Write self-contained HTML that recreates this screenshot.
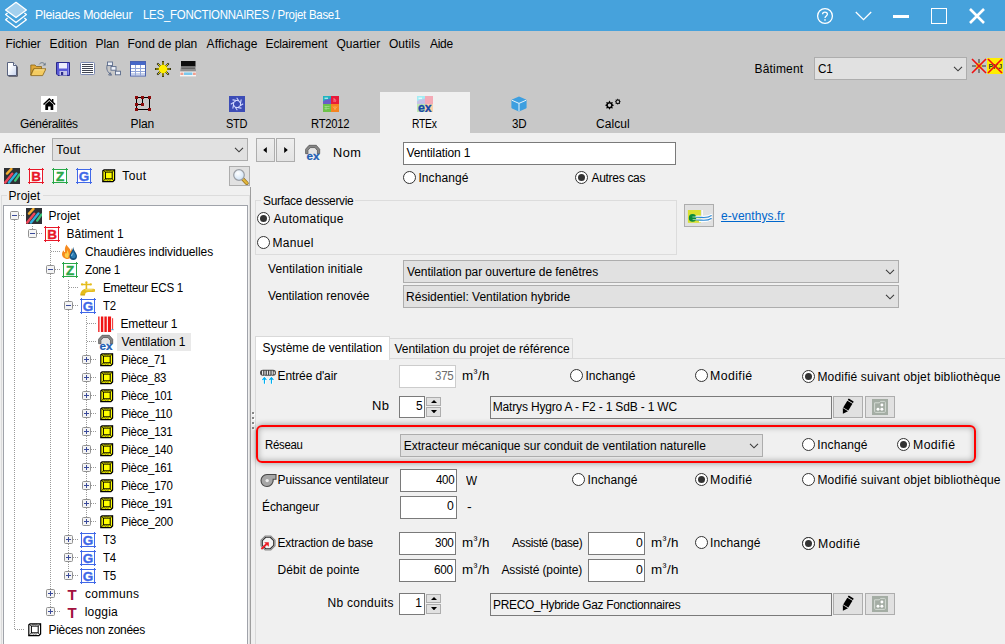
<!DOCTYPE html><html lang="fr"><head><meta charset="utf-8"><title>Pleiades Modeleur</title><style>
html,body{margin:0;padding:0;}
body{width:1005px;height:644px;overflow:hidden;position:relative;background:#f0f0f0;font-family:"Liberation Sans", sans-serif;font-size:12px;color:#000;}
.t{position:absolute;white-space:pre;line-height:18px;height:18px;transform-origin:0 50%;}
svg{display:block;}
</style></head><body><div style="position:absolute;left:0px;top:0px;width:1005px;height:31px;box-sizing:border-box;background:#46a2dc;"></div><svg style="position:absolute;left:0px;top:0px" width="32" height="31" viewBox="0 0 32 31">
<path d="M16 2.3 L26.4 10 L16 17.6 L5.6 10 Z" fill="#a3d0ee" stroke="#fff" stroke-width="1.3" stroke-linejoin="round"/>
<path d="M7.6 13 L5.6 14.6 L16 22.5 L26.4 14.6 L24.4 13" fill="none" stroke="#fff" stroke-width="1.3" stroke-linejoin="round"/>
<path d="M7.6 18.1 L5.6 19.7 L16 27.6 L26.4 19.7 L24.4 18.1" fill="none" stroke="#fff" stroke-width="1.3" stroke-linejoin="round"/>
</svg><svg style="position:absolute;left:816px;top:7px" width="18" height="18" viewBox="0 0 18 18">
<circle cx="9" cy="9" r="7.4" fill="none" stroke="#fff" stroke-width="1.3"/>
<path d="M6.6 7.2 C6.6 4.4 11.4 4.4 11.4 7.2 C11.4 8.9 9 9 9 11" fill="none" stroke="#fff" stroke-width="1.3"/>
<rect x="8.3" y="12.2" width="1.4" height="1.5" fill="#fff"/></svg><svg style="position:absolute;left:855px;top:11px" width="17" height="10" viewBox="0 0 17 10"><path d="M0.8 1 L8.5 8.6 L16.2 1" fill="none" stroke="#fff" stroke-width="1.3"/></svg><div style="position:absolute;left:893px;top:15px;width:16px;height:3px;box-sizing:border-box;background:#fff;"></div><div style="position:absolute;left:931px;top:8px;width:16px;height:16px;box-sizing:border-box;border:1px solid #fff;"></div><svg style="position:absolute;left:969px;top:8px" width="16" height="16" viewBox="0 0 16 16"><path d="M1 1 L15 15 M15 1 L1 15" fill="none" stroke="#fff" stroke-width="2.6"/></svg><div style="position:absolute;left:0px;top:31px;width:1005px;height:102px;box-sizing:border-box;background:#c8c8c8;"></div><svg style="position:absolute;left:5px;top:61px" width="16" height="16" viewBox="0 0 16 16"><defs><linearGradient id="gnf" x1="0" y1="0" x2="1" y2="1"><stop offset="0.3" stop-color="#fff"/><stop offset="1" stop-color="#c4d2ee"/></linearGradient></defs><path d="M2.5 1.5 H8.5 L11.5 4.5 V14.5 H2.5 Z" fill="url(#gnf)" stroke="#5a6480" stroke-width="1"/><path d="M8.5 1.5 V4.5 H11.5" fill="#e8eef8" stroke="#5a6480" stroke-width="1"/><path d="M12.4 5.5 V15.3 H3.5" fill="none" stroke="#3a3a4a" stroke-width="0.8"/></svg><svg style="position:absolute;left:30px;top:61px" width="16" height="16" viewBox="0 0 16 16"><path d="M0.8 4 H5 L6.3 5.5 H11.5 V8 H3.5 L0.8 14 Z" fill="#e0a838" stroke="#8a6414" stroke-width="0.8"/><path d="M3.8 7.8 H16 L12.6 14.6 H0.8 Z" fill="#f4cc62" stroke="#8a6414" stroke-width="0.8"/><path d="M4.6 8.8 H14.4" stroke="#fbe6a2" stroke-width="0.8"/><path d="M9.2 3.4 C10.6 1.2 13.4 1 14.8 3.4" fill="none" stroke="#6a7a8a" stroke-width="1"/><path d="M15.6 1.4 V4.4 H12.6 Z" fill="#6a7a8a"/></svg><svg style="position:absolute;left:55px;top:61px" width="16" height="16" viewBox="0 0 16 16"><path d="M1.5 1.5 H14.5 V14.5 H3 L1.5 13 Z" fill="#5a5ad6" stroke="#2a2a8a" stroke-width="1"/><rect x="4" y="2" width="8" height="5.5" fill="#eeeefc"/><rect x="4.5" y="10" width="7.5" height="4.5" fill="#c2c2e6"/><rect x="6" y="11" width="2.2" height="3" fill="#2a2a8a"/><path d="M13.5 2.5 V13.5" stroke="#8a8aec" stroke-width="1"/></svg><svg style="position:absolute;left:80px;top:61px" width="16" height="16" viewBox="0 0 16 16"><rect x="0.5" y="1.5" width="14" height="12" rx="1" fill="#fff" stroke="#7a88b0" stroke-width="1"/><path d="M2 3.5 H13 M2 5.5 H13 M2 7.5 H13 M2 9.5 H13 M2 11.5 H13" stroke="#2a3040" stroke-width="0.9"/></svg><svg style="position:absolute;left:105px;top:61px" width="16" height="16" viewBox="0 0 16 16"><g fill="#eef2fa" stroke="#5a6a8a" stroke-width="0.9"><rect x="2.5" y="1" width="5" height="3.6"/><rect x="6" y="5.6" width="5" height="3.6"/><rect x="10.5" y="10.2" width="5" height="3.6"/></g><path d="M2.2 4 C1 8 2.5 11.5 6 13.5 M6.6 14.2 L3.6 14 L5.2 11.6 Z M7 4.8 L6.4 5.4 M11 9.4 L10.6 10" fill="none" stroke="#5a6a8a" stroke-width="0.9"/></svg><svg style="position:absolute;left:130px;top:61px" width="16" height="16" viewBox="0 0 16 16"><rect x="0.5" y="0.5" width="15" height="14.5" fill="#fff" stroke="#4a62b0" stroke-width="1"/><rect x="1" y="1" width="14" height="3" fill="#4668c8"/><path d="M1 7.5 H15 M1 10.5 H15 M1 13 H15 M5.5 4 V15 M10.5 4 V15" stroke="#90a4d8" stroke-width="1"/></svg><svg style="position:absolute;left:155px;top:61px" width="16" height="16" viewBox="0 0 16 16"><path d="M8 0 V16 M0 8 H16 M2.3 2.3 L13.7 13.7 M13.7 2.3 L2.3 13.7" stroke="#111" stroke-width="1.9"/><path d="M8 0.6 V15.4 M0.6 8 H15.4 M2.8 2.8 L13.2 13.2 M13.2 2.8 L2.8 13.2" stroke="#ffee00" stroke-width="0.9"/><circle cx="8" cy="8" r="4.3" fill="#ffee00"/></svg><svg style="position:absolute;left:180px;top:61px" width="16" height="16" viewBox="0 0 16 16"><rect x="1" y="0" width="14.5" height="5.6" fill="#0c0c0c"/><path d="M1 5.6 H15.5 L16 10.6 H0.2 Z" fill="#8e8e8e"/><path d="M1.4 7.2 H15 " stroke="#5a5a5a" stroke-width="1.2"/><rect x="0" y="10.6" width="16" height="4.8" fill="#f6f6f6"/><rect x="4" y="11.4" width="8.4" height="2.6" fill="#7cc8ec"/><rect x="0.4" y="11.6" width="3" height="2.4" fill="#f0a090"/><rect x="13" y="11.6" width="2.8" height="2.4" fill="#f0a090"/></svg><div style="position:absolute;left:814px;top:57px;width:153px;height:23px;box-sizing:border-box;background:#e1e1e1;border:1px solid #adadad;"></div><svg style="position:absolute;left:953.4px;top:65.9px" width="10" height="6" viewBox="0 0 10 6"><path d="M1 0.8 L5 4.8 L9 0.8" fill="none" stroke="#3c3c3c" stroke-width="1.1"/></svg><svg style="position:absolute;left:971px;top:58px" width="32" height="16" viewBox="0 0 32 16">
<rect x="16" y="0" width="16" height="16" fill="#ffee00"/>
<path d="M8 1 V15 M1 8 H15 M3.5 3.5 L12.5 12.5 M12.5 3.5 L3.5 12.5" stroke="#222" stroke-width="0.9"/>
<circle cx="8" cy="8" r="3" fill="#e8d020"/>
<text x="17.5" y="11" font-family="Liberation Sans, sans-serif" font-size="7" font-weight="bold" fill="#333">PKJ</text>
<path d="M1 1 L15 15 M15 1 L1 15 M17 1 L31 15 M31 1 L17 15" stroke="#f01010" stroke-width="1.6"/>
</svg><div style="position:absolute;left:380px;top:92px;width:90px;height:41px;box-sizing:border-box;background:#f0f0f0;"></div><svg style="position:absolute;left:41px;top:96px" width="16" height="16" viewBox="0 0 16 16"><rect width="16" height="16" fill="#fff"/><path d="M8.3 2 L14.6 8 L13.6 9 L8.3 4 L3 9 L2 8 Z" fill="#000"/><path d="M4.3 8.6 L8.3 4.9 L12.3 8.6 V14 H9.6 V10.6 H7.1 V14 H4.3 Z" fill="#000"/><rect x="10.9" y="3" width="1.5" height="3" fill="#000"/></svg><svg style="position:absolute;left:135px;top:96px" width="16" height="16" viewBox="0 0 16 16"><path d="M1.5 1.5 H14.5 V13.5 H1.5 Z M7.5 1.5 V8.5 H1.5" fill="none" stroke="#000" stroke-width="1"/><g fill="#8b0a0a"><rect x="0" y="0" width="3" height="3"/><rect x="6" y="0" width="3" height="3"/><rect x="13" y="0" width="3" height="3"/><rect x="0" y="7" width="3" height="3"/><rect x="6" y="7" width="3" height="3"/><rect x="0" y="12" width="3" height="3"/><rect x="13" y="12" width="3" height="3"/></g></svg><svg style="position:absolute;left:229px;top:96px" width="16" height="16" viewBox="0 0 16 16"><rect width="16" height="16" fill="#3c4cb6"/><path d="M13.8 8.0 L9.5 10.9 M12.1 12.1 L7.0 11.2 M8.0 13.8 L5.1 9.5 M3.9 12.1 L4.8 7.0 M2.2 8.0 L6.5 5.1 M3.9 3.9 L9.0 4.8 M8.0 2.2 L10.9 6.5 M12.1 3.9 L11.2 9.0" stroke="#d4daff" stroke-width="1.1" fill="none" stroke-linecap="round"/><circle cx="8" cy="8" r="2.6" fill="#3c4cb6"/></svg><svg style="position:absolute;left:323px;top:96px" width="16" height="16" viewBox="0 0 16 16"><rect x="0" y="0" width="8" height="8" fill="#1fb4c0"/><path d="M0 8 V5.5 C3 3 6 3.5 8 2.5 V8 Z" fill="#6a5cc8"/><rect x="8" y="0" width="8" height="8" fill="#e81a3a"/><rect x="0" y="8" width="8" height="8" fill="#6cc24a"/><rect x="8" y="8" width="8" height="8" fill="#f5841f"/><path d="M1.5 2.2 H5" stroke="#fff" stroke-width="1" opacity="0.9"/><path d="M11 2 V6 M11 4 C12.5 3 13.5 4 12 6" stroke="#f8a0a8" stroke-width="0.7" fill="none"/><path d="M1.5 10.5 H6.5 M1.5 12.5 H6.5 M3 10 V14" stroke="#a8e090" stroke-width="0.7"/><path d="M10 10.5 C11 13 13 13 14 10.5 M12 10 V14" stroke="#fbb870" stroke-width="0.7" fill="none"/></svg><svg style="position:absolute;left:416.8px;top:96px" width="16" height="16" viewBox="0 0 16 16"><rect x="0" y="0" width="8" height="8" fill="#a4ecf4"/><path d="M0 8 V5.5 C3 3 6 3.5 8 2.5 V8 Z" fill="#c6c0e6"/><rect x="8" y="0" width="8" height="8" fill="#f4aab6"/><rect x="0" y="8" width="8" height="8" fill="#bce8b2"/><rect x="8" y="8" width="8" height="8" fill="#fcd2aa"/><path d="M1.5 2.2 H5" stroke="#fff" stroke-width="1"/><text x="0.9" y="15.6" font-family="Liberation Sans, sans-serif" font-size="13" font-weight="bold" fill="#1848a8" stroke="#1848a8" stroke-width="0.3" textLength="13.8" lengthAdjust="spacingAndGlyphs">ex</text></svg><svg style="position:absolute;left:511.20000000000005px;top:96px" width="16" height="16" viewBox="0 0 16 16"><path d="M8 0.6 L15 3.6 Q15.6 3.9 15.6 4.6 V11.4 Q15.6 12.1 15 12.4 L8 15.4 L1 12.4 Q0.4 12.1 0.4 11.4 V4.6 Q0.4 3.9 1 3.6 Z" fill="#3d9fe0"/><path d="M0.8 4.2 L8 7.4 L15.2 4.2 M8 7.4 V15.2" fill="none" stroke="#e8f4fc" stroke-width="1"/></svg><svg style="position:absolute;left:605px;top:96px" width="16" height="16" viewBox="0 0 16 16"><path fill-rule="evenodd" fill="#000" d="M4.50 4.60 L5.65 6.43 L7.75 5.95 L7.27 8.05 L9.10 9.20 L7.27 10.35 L7.75 12.45 L5.65 11.97 L4.50 13.80 L3.35 11.97 L1.25 12.45 L1.73 10.35 L-0.10 9.20 L1.73 8.05 L1.25 5.95 L3.35 6.43 Z M2.80 9.20 a1.7 1.7 0 1 0 3.4 0 a1.7 1.7 0 1 0 -3.4 0 Z"/><path fill-rule="evenodd" fill="#000" d="M12.80 2.60 L13.60 3.76 L14.99 3.51 L14.74 4.90 L15.90 5.70 L14.74 6.50 L14.99 7.89 L13.60 7.64 L12.80 8.80 L12.00 7.64 L10.61 7.89 L10.86 6.50 L9.70 5.70 L10.86 4.90 L10.61 3.51 L12.00 3.76 Z M11.50 5.70 a1.3 1.3 0 1 0 2.6 0 a1.3 1.3 0 1 0 -2.6 0 Z"/></svg><div style="position:absolute;left:52px;top:138px;width:196px;height:23px;box-sizing:border-box;background:#e1e1e1;border:1px solid #adadad;"></div><svg style="position:absolute;left:234.4px;top:146.9px" width="10" height="6" viewBox="0 0 10 6"><path d="M1 0.8 L5 4.8 L9 0.8" fill="none" stroke="#3c3c3c" stroke-width="1.1"/></svg><svg style="position:absolute;left:4px;top:168px" width="16" height="16" viewBox="0 0 16 16"><rect width="16" height="16" fill="#2f3135"/><g stroke-linecap="round" stroke-width="2.4" fill="none"><path d="M3 5.6 L7.4 0.9" stroke="#f5b032"/><path d="M1.2 14.6 L8.2 5.8" stroke="#f0455a"/><path d="M5 14.6 L12.4 5.4" stroke="#2fb0e0"/><path d="M11.2 12.6 L15.4 6.6" stroke="#3cc878"/></g></svg><svg style="position:absolute;left:28px;top:168px" width="16" height="16" viewBox="0 0 16 16"><rect x="1.5" y="1.5" width="13" height="13" fill="#fff" stroke="#e81828" stroke-width="1"/><path d="M1.5 0 V16 M14.5 0 V16 M0 1.5 H16 M0 14.5 H16" stroke="#e81828" stroke-width="1"/><text x="8" y="12.9" text-anchor="middle" font-family="Liberation Sans, sans-serif" font-size="13.5" font-weight="bold" fill="#e81828" stroke="#e81828" stroke-width="0.35">B</text></svg><svg style="position:absolute;left:52px;top:168px" width="16" height="16" viewBox="0 0 16 16"><rect x="1.5" y="1.5" width="13" height="13" fill="#fff" stroke="#28a848" stroke-width="1"/><path d="M1.5 0 V16 M14.5 0 V16 M0 1.5 H16 M0 14.5 H16" stroke="#28a848" stroke-width="1"/><text x="8" y="12.9" text-anchor="middle" font-family="Liberation Sans, sans-serif" font-size="13.5" font-weight="bold" fill="#28a848" stroke="#28a848" stroke-width="0.35">Z</text></svg><svg style="position:absolute;left:76px;top:168px" width="16" height="16" viewBox="0 0 16 16"><rect x="1.5" y="1.5" width="13" height="13" fill="#fff" stroke="#4068e8" stroke-width="1"/><path d="M1.5 0 V16 M14.5 0 V16 M0 1.5 H16 M0 14.5 H16" stroke="#4068e8" stroke-width="1"/><text x="8" y="12.9" text-anchor="middle" font-family="Liberation Sans, sans-serif" font-size="13.5" font-weight="bold" fill="#4068e8" stroke="#4068e8" stroke-width="0.35">G</text></svg><svg style="position:absolute;left:101.2px;top:167.6px" width="16" height="16" viewBox="0 0 16 16"><path d="M3.1 1.9 H13.6 V12 L11.9 13.7 H1.8 V2.9 Z" fill="#ffff00" stroke="#000" stroke-width="1.2" stroke-linejoin="miter"/><rect x="4.4" y="4.1" width="6.8" height="6.7" fill="#ffff00" stroke="#000" stroke-width="1"/><path d="M2.2 2.3 L4.4 4.1 M13.6 1.9 L11.2 4.1 M1.8 13.7 L4.4 10.8 M12.8 12.9 L11.2 10.8" stroke="#000" stroke-width="0.8"/><path d="M5 2.9 l0.9 -0.6 l0.9 0.6 l0.9 -0.6 l0.9 0.6 l0.9 -0.6 l0.9 0.6 M4.6 12.4 l0.9 -0.6 l0.9 0.6 l0.9 -0.6 l0.9 0.6 l0.9 -0.6 l0.9 0.6" stroke="#000" stroke-width="0.45" fill="none"/></svg><div style="position:absolute;left:229px;top:166px;width:21px;height:20px;box-sizing:border-box;background:#e1e1e1;border:1px solid #adadad;"></div><svg style="position:absolute;left:232px;top:168px" width="17" height="17" viewBox="0 0 17 17"><defs><radialGradient id="glens" cx="0.4" cy="0.35" r="0.8"><stop offset="0" stop-color="#fff"/><stop offset="1" stop-color="#c4dcf4"/></radialGradient></defs><path d="M10.8 11 L14.8 15.2" stroke="#8a6a1a" stroke-width="3.6" stroke-linecap="round"/><path d="M10.8 11 L14.8 15.2" stroke="#e0b43a" stroke-width="2.4" stroke-linecap="round"/><circle cx="7" cy="7" r="5.3" fill="url(#glens)" stroke="#9a9ea4" stroke-width="1.2"/></svg><div style="position:absolute;left:1px;top:195px;width:249px;height:465px;box-sizing:border-box;border:1px solid #dcdcdc;"></div><div style="position:absolute;left:7px;top:188px;width:36px;height:15px;box-sizing:border-box;background:#f0f0f0;"></div><div style="position:absolute;left:3px;top:205px;width:245px;height:455px;box-sizing:border-box;background:#fff;border:1px solid #a0a3aa;"></div><div style="position:absolute;left:14px;top:220px;width:1px;height:410px;background:repeating-linear-gradient(to bottom,#9a9a9a 0 1px,transparent 1px 2px);"></div><div style="position:absolute;left:32px;top:226px;width:1px;height:3px;background:repeating-linear-gradient(to bottom,#9a9a9a 0 1px,transparent 1px 2px);"></div><div style="position:absolute;left:50px;top:244px;width:1px;height:363px;background:repeating-linear-gradient(to bottom,#9a9a9a 0 1px,transparent 1px 2px);"></div><div style="position:absolute;left:68px;top:280px;width:1px;height:291px;background:repeating-linear-gradient(to bottom,#9a9a9a 0 1px,transparent 1px 2px);"></div><div style="position:absolute;left:86px;top:316px;width:1px;height:201px;background:repeating-linear-gradient(to bottom,#9a9a9a 0 1px,transparent 1px 2px);"></div><div style="position:absolute;left:117px;top:333px;width:74px;height:18px;box-sizing:border-box;background:#e9e9e9;"></div><div style="position:absolute;left:19px;top:215px;width:6px;height:1px;background:repeating-linear-gradient(to right,#9a9a9a 0 1px,transparent 1px 2px);"></div><svg style="position:absolute;left:10.0px;top:211.0px" width="9" height="9" viewBox="0 0 9 9"><rect x="0.5" y="0.5" width="8" height="8" rx="1" fill="#f4f4f4" stroke="#919191" stroke-width="1"/><path d="M2 4.5 H7" stroke="#3a4a9a" stroke-width="1"/></svg><svg style="position:absolute;left:25.8px;top:207.5px" width="16" height="16" viewBox="0 0 16 16"><rect width="16" height="16" fill="#2f3135"/><g stroke-linecap="round" stroke-width="2.4" fill="none"><path d="M3 5.6 L7.4 0.9" stroke="#f5b032"/><path d="M1.2 14.6 L8.2 5.8" stroke="#f0455a"/><path d="M5 14.6 L12.4 5.4" stroke="#2fb0e0"/><path d="M11.2 12.6 L15.4 6.6" stroke="#3cc878"/></g></svg><div style="position:absolute;left:37px;top:233px;width:6px;height:1px;background:repeating-linear-gradient(to right,#9a9a9a 0 1px,transparent 1px 2px);"></div><svg style="position:absolute;left:28.0px;top:229.0px" width="9" height="9" viewBox="0 0 9 9"><rect x="0.5" y="0.5" width="8" height="8" rx="1" fill="#f4f4f4" stroke="#919191" stroke-width="1"/><path d="M2 4.5 H7" stroke="#3a4a9a" stroke-width="1"/></svg><svg style="position:absolute;left:43.8px;top:225.5px" width="16" height="16" viewBox="0 0 16 16"><rect x="1.5" y="1.5" width="13" height="13" fill="#fff" stroke="#e81828" stroke-width="1"/><path d="M1.5 0 V16 M14.5 0 V16 M0 1.5 H16 M0 14.5 H16" stroke="#e81828" stroke-width="1"/><text x="8" y="12.9" text-anchor="middle" font-family="Liberation Sans, sans-serif" font-size="13.5" font-weight="bold" fill="#e81828" stroke="#e81828" stroke-width="0.35">B</text></svg><div style="position:absolute;left:51px;top:251px;width:10px;height:1px;background:repeating-linear-gradient(to right,#9a9a9a 0 1px,transparent 1px 2px);"></div><svg style="position:absolute;left:61.3px;top:243.5px" width="16" height="16" viewBox="0 0 16 16"><path d="M5.6 0.4 C6.4 3 9.4 4 9.6 7.2 C10.6 6.4 10.6 5 10.2 4 C13 7 12.4 14.4 6.6 15 C1.4 15 -0.6 10 2.4 6.2 C2.8 7.6 3.4 8 4.2 8 C3.4 5.6 4 2.4 5.6 0.4 Z" fill="#f68a1e"/><path d="M6.2 6 C7.8 8.4 8.8 11.6 6.6 14 C3.6 14 3 10.6 4.6 9 C5 9.6 5.6 9.6 5.8 9 Z" fill="#fdd04a"/><path d="M12.2 3 C12.8 7 16 9.6 16 12.2 A3.7 3.7 0 0 1 8.6 12.2 C8.6 9.6 11.6 7 12.2 3 Z" fill="#15507e"/><path d="M12.2 6.5 C12.6 9 14.8 10.6 14.8 12.2 A2.6 2.6 0 0 1 9.8 12.4 C9.8 10.4 11.8 9 12.2 6.5 Z" fill="#2a7db4"/><path d="M10.6 12 C10.6 11 11.3 10.2 11.9 9.4" stroke="#a4d4f4" stroke-width="0.9" fill="none"/></svg><div style="position:absolute;left:55px;top:269px;width:6px;height:1px;background:repeating-linear-gradient(to right,#9a9a9a 0 1px,transparent 1px 2px);"></div><svg style="position:absolute;left:46.0px;top:265.0px" width="9" height="9" viewBox="0 0 9 9"><rect x="0.5" y="0.5" width="8" height="8" rx="1" fill="#f4f4f4" stroke="#919191" stroke-width="1"/><path d="M2 4.5 H7" stroke="#3a4a9a" stroke-width="1"/></svg><svg style="position:absolute;left:61.8px;top:261.5px" width="16" height="16" viewBox="0 0 16 16"><rect x="1.5" y="1.5" width="13" height="13" fill="#fff" stroke="#28a848" stroke-width="1"/><path d="M1.5 0 V16 M14.5 0 V16 M0 1.5 H16 M0 14.5 H16" stroke="#28a848" stroke-width="1"/><text x="8" y="12.9" text-anchor="middle" font-family="Liberation Sans, sans-serif" font-size="13.5" font-weight="bold" fill="#28a848" stroke="#28a848" stroke-width="0.35">Z</text></svg><div style="position:absolute;left:69px;top:287px;width:10px;height:1px;background:repeating-linear-gradient(to right,#9a9a9a 0 1px,transparent 1px 2px);"></div><svg style="position:absolute;left:79.3px;top:279.5px" width="16" height="16" viewBox="0 0 16 16"><g fill="#e4bc1c"><rect x="2.8" y="3.7" width="9.2" height="1.5" rx="0.7"/><rect x="6.6" y="2.2" width="1.6" height="7"/><circle cx="7.4" cy="2.3" r="1.1"/><circle cx="3" cy="4.4" r="1.15"/><circle cx="11.8" cy="4.4" r="1.15"/><path d="M14.8 8.7 V12 H9.4 C7.4 12 6 13 6 15.2 H1.3 C1.3 11.2 3.8 8.7 7.6 8.7 Z"/><rect x="14.4" y="9" width="1.6" height="2.8" rx="0.6"/></g><path d="M6.4 9.8 H13.6" stroke="#f8e888" stroke-width="0.9"/><path d="M1.6 15 H5.8" stroke="#b8900c" stroke-width="0.7"/></svg><div style="position:absolute;left:73px;top:305px;width:6px;height:1px;background:repeating-linear-gradient(to right,#9a9a9a 0 1px,transparent 1px 2px);"></div><svg style="position:absolute;left:64.0px;top:301.0px" width="9" height="9" viewBox="0 0 9 9"><rect x="0.5" y="0.5" width="8" height="8" rx="1" fill="#f4f4f4" stroke="#919191" stroke-width="1"/><path d="M2 4.5 H7" stroke="#3a4a9a" stroke-width="1"/></svg><svg style="position:absolute;left:79.8px;top:297.5px" width="16" height="16" viewBox="0 0 16 16"><rect x="1.5" y="1.5" width="13" height="13" fill="#fff" stroke="#4068e8" stroke-width="1"/><path d="M1.5 0 V16 M14.5 0 V16 M0 1.5 H16 M0 14.5 H16" stroke="#4068e8" stroke-width="1"/><text x="8" y="12.9" text-anchor="middle" font-family="Liberation Sans, sans-serif" font-size="13.5" font-weight="bold" fill="#4068e8" stroke="#4068e8" stroke-width="0.35">G</text></svg><div style="position:absolute;left:87px;top:323px;width:10px;height:1px;background:repeating-linear-gradient(to right,#9a9a9a 0 1px,transparent 1px 2px);"></div><svg style="position:absolute;left:97.9px;top:315.5px" width="16" height="16" viewBox="0 0 16 16"><g fill="#f01414"><rect x="0.2" y="0.5" width="1.3" height="15.6"/><rect x="2.9" y="0.5" width="2.4" height="15.6"/><rect x="6.4" y="0.5" width="2.4" height="15.6"/><rect x="9.9" y="0.5" width="3.2" height="15.6"/><rect x="14.2" y="2.2" width="0.9" height="11.6"/></g><rect x="13.4" y="13.2" width="2.2" height="1" fill="#28b4ec"/></svg><div style="position:absolute;left:87px;top:341px;width:10px;height:1px;background:repeating-linear-gradient(to right,#9a9a9a 0 1px,transparent 1px 2px);"></div><svg style="position:absolute;left:97.9px;top:333.5px" width="16" height="16" viewBox="0 0 16 16"><path d="M0.6 9.7 V5.2 L4 1.3 H11.3 L14.7 5.2 V9.7 H12.1 V6.2 L10.1 3.9 H5.2 L3.2 6.2 V9.7 Z" fill="#868686" stroke="#4a4a4a" stroke-width="0.7"/><path d="M3.6 9.7 V6.4 L5.4 4.3 H9.9 L11.7 6.4 V9.7 Z" fill="#e4e4e4"/><text x="1.5" y="15.8" font-family="Liberation Sans, sans-serif" font-size="11.5" font-weight="bold" fill="#1f5fb4" stroke="#1f5fb4" stroke-width="0.3" textLength="13" lengthAdjust="spacingAndGlyphs">ex</text></svg><div style="position:absolute;left:91px;top:359px;width:6px;height:1px;background:repeating-linear-gradient(to right,#9a9a9a 0 1px,transparent 1px 2px);"></div><svg style="position:absolute;left:82.0px;top:355.0px" width="9" height="9" viewBox="0 0 9 9"><rect x="0.5" y="0.5" width="8" height="8" rx="1" fill="#f4f4f4" stroke="#919191" stroke-width="1"/><path d="M2 4.5 H7" stroke="#3a4a9a" stroke-width="1"/><path d="M4.5 2 V7" stroke="#3a4a9a" stroke-width="1"/></svg><svg style="position:absolute;left:98.5px;top:351.5px" width="16" height="16" viewBox="0 0 16 16"><path d="M3.1 1.9 H13.6 V12 L11.9 13.7 H1.8 V2.9 Z" fill="#ffff00" stroke="#000" stroke-width="1.2" stroke-linejoin="miter"/><rect x="4.4" y="4.1" width="6.8" height="6.7" fill="#ffff00" stroke="#000" stroke-width="1"/><path d="M2.2 2.3 L4.4 4.1 M13.6 1.9 L11.2 4.1 M1.8 13.7 L4.4 10.8 M12.8 12.9 L11.2 10.8" stroke="#000" stroke-width="0.8"/><path d="M5 2.9 l0.9 -0.6 l0.9 0.6 l0.9 -0.6 l0.9 0.6 l0.9 -0.6 l0.9 0.6 M4.6 12.4 l0.9 -0.6 l0.9 0.6 l0.9 -0.6 l0.9 0.6 l0.9 -0.6 l0.9 0.6" stroke="#000" stroke-width="0.45" fill="none"/></svg><div style="position:absolute;left:91px;top:377px;width:6px;height:1px;background:repeating-linear-gradient(to right,#9a9a9a 0 1px,transparent 1px 2px);"></div><svg style="position:absolute;left:82.0px;top:373.0px" width="9" height="9" viewBox="0 0 9 9"><rect x="0.5" y="0.5" width="8" height="8" rx="1" fill="#f4f4f4" stroke="#919191" stroke-width="1"/><path d="M2 4.5 H7" stroke="#3a4a9a" stroke-width="1"/><path d="M4.5 2 V7" stroke="#3a4a9a" stroke-width="1"/></svg><svg style="position:absolute;left:98.5px;top:369.5px" width="16" height="16" viewBox="0 0 16 16"><path d="M3.1 1.9 H13.6 V12 L11.9 13.7 H1.8 V2.9 Z" fill="#ffff00" stroke="#000" stroke-width="1.2" stroke-linejoin="miter"/><rect x="4.4" y="4.1" width="6.8" height="6.7" fill="#ffff00" stroke="#000" stroke-width="1"/><path d="M2.2 2.3 L4.4 4.1 M13.6 1.9 L11.2 4.1 M1.8 13.7 L4.4 10.8 M12.8 12.9 L11.2 10.8" stroke="#000" stroke-width="0.8"/><path d="M5 2.9 l0.9 -0.6 l0.9 0.6 l0.9 -0.6 l0.9 0.6 l0.9 -0.6 l0.9 0.6 M4.6 12.4 l0.9 -0.6 l0.9 0.6 l0.9 -0.6 l0.9 0.6 l0.9 -0.6 l0.9 0.6" stroke="#000" stroke-width="0.45" fill="none"/></svg><div style="position:absolute;left:91px;top:395px;width:6px;height:1px;background:repeating-linear-gradient(to right,#9a9a9a 0 1px,transparent 1px 2px);"></div><svg style="position:absolute;left:82.0px;top:391.0px" width="9" height="9" viewBox="0 0 9 9"><rect x="0.5" y="0.5" width="8" height="8" rx="1" fill="#f4f4f4" stroke="#919191" stroke-width="1"/><path d="M2 4.5 H7" stroke="#3a4a9a" stroke-width="1"/><path d="M4.5 2 V7" stroke="#3a4a9a" stroke-width="1"/></svg><svg style="position:absolute;left:98.5px;top:387.5px" width="16" height="16" viewBox="0 0 16 16"><path d="M3.1 1.9 H13.6 V12 L11.9 13.7 H1.8 V2.9 Z" fill="#ffff00" stroke="#000" stroke-width="1.2" stroke-linejoin="miter"/><rect x="4.4" y="4.1" width="6.8" height="6.7" fill="#ffff00" stroke="#000" stroke-width="1"/><path d="M2.2 2.3 L4.4 4.1 M13.6 1.9 L11.2 4.1 M1.8 13.7 L4.4 10.8 M12.8 12.9 L11.2 10.8" stroke="#000" stroke-width="0.8"/><path d="M5 2.9 l0.9 -0.6 l0.9 0.6 l0.9 -0.6 l0.9 0.6 l0.9 -0.6 l0.9 0.6 M4.6 12.4 l0.9 -0.6 l0.9 0.6 l0.9 -0.6 l0.9 0.6 l0.9 -0.6 l0.9 0.6" stroke="#000" stroke-width="0.45" fill="none"/></svg><div style="position:absolute;left:91px;top:413px;width:6px;height:1px;background:repeating-linear-gradient(to right,#9a9a9a 0 1px,transparent 1px 2px);"></div><svg style="position:absolute;left:82.0px;top:409.0px" width="9" height="9" viewBox="0 0 9 9"><rect x="0.5" y="0.5" width="8" height="8" rx="1" fill="#f4f4f4" stroke="#919191" stroke-width="1"/><path d="M2 4.5 H7" stroke="#3a4a9a" stroke-width="1"/><path d="M4.5 2 V7" stroke="#3a4a9a" stroke-width="1"/></svg><svg style="position:absolute;left:98.5px;top:405.5px" width="16" height="16" viewBox="0 0 16 16"><path d="M3.1 1.9 H13.6 V12 L11.9 13.7 H1.8 V2.9 Z" fill="#ffff00" stroke="#000" stroke-width="1.2" stroke-linejoin="miter"/><rect x="4.4" y="4.1" width="6.8" height="6.7" fill="#ffff00" stroke="#000" stroke-width="1"/><path d="M2.2 2.3 L4.4 4.1 M13.6 1.9 L11.2 4.1 M1.8 13.7 L4.4 10.8 M12.8 12.9 L11.2 10.8" stroke="#000" stroke-width="0.8"/><path d="M5 2.9 l0.9 -0.6 l0.9 0.6 l0.9 -0.6 l0.9 0.6 l0.9 -0.6 l0.9 0.6 M4.6 12.4 l0.9 -0.6 l0.9 0.6 l0.9 -0.6 l0.9 0.6 l0.9 -0.6 l0.9 0.6" stroke="#000" stroke-width="0.45" fill="none"/></svg><div style="position:absolute;left:91px;top:431px;width:6px;height:1px;background:repeating-linear-gradient(to right,#9a9a9a 0 1px,transparent 1px 2px);"></div><svg style="position:absolute;left:82.0px;top:427.0px" width="9" height="9" viewBox="0 0 9 9"><rect x="0.5" y="0.5" width="8" height="8" rx="1" fill="#f4f4f4" stroke="#919191" stroke-width="1"/><path d="M2 4.5 H7" stroke="#3a4a9a" stroke-width="1"/><path d="M4.5 2 V7" stroke="#3a4a9a" stroke-width="1"/></svg><svg style="position:absolute;left:98.5px;top:423.5px" width="16" height="16" viewBox="0 0 16 16"><path d="M3.1 1.9 H13.6 V12 L11.9 13.7 H1.8 V2.9 Z" fill="#ffff00" stroke="#000" stroke-width="1.2" stroke-linejoin="miter"/><rect x="4.4" y="4.1" width="6.8" height="6.7" fill="#ffff00" stroke="#000" stroke-width="1"/><path d="M2.2 2.3 L4.4 4.1 M13.6 1.9 L11.2 4.1 M1.8 13.7 L4.4 10.8 M12.8 12.9 L11.2 10.8" stroke="#000" stroke-width="0.8"/><path d="M5 2.9 l0.9 -0.6 l0.9 0.6 l0.9 -0.6 l0.9 0.6 l0.9 -0.6 l0.9 0.6 M4.6 12.4 l0.9 -0.6 l0.9 0.6 l0.9 -0.6 l0.9 0.6 l0.9 -0.6 l0.9 0.6" stroke="#000" stroke-width="0.45" fill="none"/></svg><div style="position:absolute;left:91px;top:449px;width:6px;height:1px;background:repeating-linear-gradient(to right,#9a9a9a 0 1px,transparent 1px 2px);"></div><svg style="position:absolute;left:82.0px;top:445.0px" width="9" height="9" viewBox="0 0 9 9"><rect x="0.5" y="0.5" width="8" height="8" rx="1" fill="#f4f4f4" stroke="#919191" stroke-width="1"/><path d="M2 4.5 H7" stroke="#3a4a9a" stroke-width="1"/><path d="M4.5 2 V7" stroke="#3a4a9a" stroke-width="1"/></svg><svg style="position:absolute;left:98.5px;top:441.5px" width="16" height="16" viewBox="0 0 16 16"><path d="M3.1 1.9 H13.6 V12 L11.9 13.7 H1.8 V2.9 Z" fill="#ffff00" stroke="#000" stroke-width="1.2" stroke-linejoin="miter"/><rect x="4.4" y="4.1" width="6.8" height="6.7" fill="#ffff00" stroke="#000" stroke-width="1"/><path d="M2.2 2.3 L4.4 4.1 M13.6 1.9 L11.2 4.1 M1.8 13.7 L4.4 10.8 M12.8 12.9 L11.2 10.8" stroke="#000" stroke-width="0.8"/><path d="M5 2.9 l0.9 -0.6 l0.9 0.6 l0.9 -0.6 l0.9 0.6 l0.9 -0.6 l0.9 0.6 M4.6 12.4 l0.9 -0.6 l0.9 0.6 l0.9 -0.6 l0.9 0.6 l0.9 -0.6 l0.9 0.6" stroke="#000" stroke-width="0.45" fill="none"/></svg><div style="position:absolute;left:91px;top:467px;width:6px;height:1px;background:repeating-linear-gradient(to right,#9a9a9a 0 1px,transparent 1px 2px);"></div><svg style="position:absolute;left:82.0px;top:463.0px" width="9" height="9" viewBox="0 0 9 9"><rect x="0.5" y="0.5" width="8" height="8" rx="1" fill="#f4f4f4" stroke="#919191" stroke-width="1"/><path d="M2 4.5 H7" stroke="#3a4a9a" stroke-width="1"/><path d="M4.5 2 V7" stroke="#3a4a9a" stroke-width="1"/></svg><svg style="position:absolute;left:98.5px;top:459.5px" width="16" height="16" viewBox="0 0 16 16"><path d="M3.1 1.9 H13.6 V12 L11.9 13.7 H1.8 V2.9 Z" fill="#ffff00" stroke="#000" stroke-width="1.2" stroke-linejoin="miter"/><rect x="4.4" y="4.1" width="6.8" height="6.7" fill="#ffff00" stroke="#000" stroke-width="1"/><path d="M2.2 2.3 L4.4 4.1 M13.6 1.9 L11.2 4.1 M1.8 13.7 L4.4 10.8 M12.8 12.9 L11.2 10.8" stroke="#000" stroke-width="0.8"/><path d="M5 2.9 l0.9 -0.6 l0.9 0.6 l0.9 -0.6 l0.9 0.6 l0.9 -0.6 l0.9 0.6 M4.6 12.4 l0.9 -0.6 l0.9 0.6 l0.9 -0.6 l0.9 0.6 l0.9 -0.6 l0.9 0.6" stroke="#000" stroke-width="0.45" fill="none"/></svg><div style="position:absolute;left:91px;top:485px;width:6px;height:1px;background:repeating-linear-gradient(to right,#9a9a9a 0 1px,transparent 1px 2px);"></div><svg style="position:absolute;left:82.0px;top:481.0px" width="9" height="9" viewBox="0 0 9 9"><rect x="0.5" y="0.5" width="8" height="8" rx="1" fill="#f4f4f4" stroke="#919191" stroke-width="1"/><path d="M2 4.5 H7" stroke="#3a4a9a" stroke-width="1"/><path d="M4.5 2 V7" stroke="#3a4a9a" stroke-width="1"/></svg><svg style="position:absolute;left:98.5px;top:477.5px" width="16" height="16" viewBox="0 0 16 16"><path d="M3.1 1.9 H13.6 V12 L11.9 13.7 H1.8 V2.9 Z" fill="#ffff00" stroke="#000" stroke-width="1.2" stroke-linejoin="miter"/><rect x="4.4" y="4.1" width="6.8" height="6.7" fill="#ffff00" stroke="#000" stroke-width="1"/><path d="M2.2 2.3 L4.4 4.1 M13.6 1.9 L11.2 4.1 M1.8 13.7 L4.4 10.8 M12.8 12.9 L11.2 10.8" stroke="#000" stroke-width="0.8"/><path d="M5 2.9 l0.9 -0.6 l0.9 0.6 l0.9 -0.6 l0.9 0.6 l0.9 -0.6 l0.9 0.6 M4.6 12.4 l0.9 -0.6 l0.9 0.6 l0.9 -0.6 l0.9 0.6 l0.9 -0.6 l0.9 0.6" stroke="#000" stroke-width="0.45" fill="none"/></svg><div style="position:absolute;left:91px;top:503px;width:6px;height:1px;background:repeating-linear-gradient(to right,#9a9a9a 0 1px,transparent 1px 2px);"></div><svg style="position:absolute;left:82.0px;top:499.0px" width="9" height="9" viewBox="0 0 9 9"><rect x="0.5" y="0.5" width="8" height="8" rx="1" fill="#f4f4f4" stroke="#919191" stroke-width="1"/><path d="M2 4.5 H7" stroke="#3a4a9a" stroke-width="1"/><path d="M4.5 2 V7" stroke="#3a4a9a" stroke-width="1"/></svg><svg style="position:absolute;left:98.5px;top:495.5px" width="16" height="16" viewBox="0 0 16 16"><path d="M3.1 1.9 H13.6 V12 L11.9 13.7 H1.8 V2.9 Z" fill="#ffff00" stroke="#000" stroke-width="1.2" stroke-linejoin="miter"/><rect x="4.4" y="4.1" width="6.8" height="6.7" fill="#ffff00" stroke="#000" stroke-width="1"/><path d="M2.2 2.3 L4.4 4.1 M13.6 1.9 L11.2 4.1 M1.8 13.7 L4.4 10.8 M12.8 12.9 L11.2 10.8" stroke="#000" stroke-width="0.8"/><path d="M5 2.9 l0.9 -0.6 l0.9 0.6 l0.9 -0.6 l0.9 0.6 l0.9 -0.6 l0.9 0.6 M4.6 12.4 l0.9 -0.6 l0.9 0.6 l0.9 -0.6 l0.9 0.6 l0.9 -0.6 l0.9 0.6" stroke="#000" stroke-width="0.45" fill="none"/></svg><div style="position:absolute;left:91px;top:521px;width:6px;height:1px;background:repeating-linear-gradient(to right,#9a9a9a 0 1px,transparent 1px 2px);"></div><svg style="position:absolute;left:82.0px;top:517.0px" width="9" height="9" viewBox="0 0 9 9"><rect x="0.5" y="0.5" width="8" height="8" rx="1" fill="#f4f4f4" stroke="#919191" stroke-width="1"/><path d="M2 4.5 H7" stroke="#3a4a9a" stroke-width="1"/><path d="M4.5 2 V7" stroke="#3a4a9a" stroke-width="1"/></svg><svg style="position:absolute;left:98.5px;top:513.5px" width="16" height="16" viewBox="0 0 16 16"><path d="M3.1 1.9 H13.6 V12 L11.9 13.7 H1.8 V2.9 Z" fill="#ffff00" stroke="#000" stroke-width="1.2" stroke-linejoin="miter"/><rect x="4.4" y="4.1" width="6.8" height="6.7" fill="#ffff00" stroke="#000" stroke-width="1"/><path d="M2.2 2.3 L4.4 4.1 M13.6 1.9 L11.2 4.1 M1.8 13.7 L4.4 10.8 M12.8 12.9 L11.2 10.8" stroke="#000" stroke-width="0.8"/><path d="M5 2.9 l0.9 -0.6 l0.9 0.6 l0.9 -0.6 l0.9 0.6 l0.9 -0.6 l0.9 0.6 M4.6 12.4 l0.9 -0.6 l0.9 0.6 l0.9 -0.6 l0.9 0.6 l0.9 -0.6 l0.9 0.6" stroke="#000" stroke-width="0.45" fill="none"/></svg><div style="position:absolute;left:73px;top:539px;width:6px;height:1px;background:repeating-linear-gradient(to right,#9a9a9a 0 1px,transparent 1px 2px);"></div><svg style="position:absolute;left:64.0px;top:535.0px" width="9" height="9" viewBox="0 0 9 9"><rect x="0.5" y="0.5" width="8" height="8" rx="1" fill="#f4f4f4" stroke="#919191" stroke-width="1"/><path d="M2 4.5 H7" stroke="#3a4a9a" stroke-width="1"/><path d="M4.5 2 V7" stroke="#3a4a9a" stroke-width="1"/></svg><svg style="position:absolute;left:79.8px;top:531.5px" width="16" height="16" viewBox="0 0 16 16"><rect x="1.5" y="1.5" width="13" height="13" fill="#fff" stroke="#4068e8" stroke-width="1"/><path d="M1.5 0 V16 M14.5 0 V16 M0 1.5 H16 M0 14.5 H16" stroke="#4068e8" stroke-width="1"/><text x="8" y="12.9" text-anchor="middle" font-family="Liberation Sans, sans-serif" font-size="13.5" font-weight="bold" fill="#4068e8" stroke="#4068e8" stroke-width="0.35">G</text></svg><div style="position:absolute;left:73px;top:557px;width:6px;height:1px;background:repeating-linear-gradient(to right,#9a9a9a 0 1px,transparent 1px 2px);"></div><svg style="position:absolute;left:64.0px;top:553.0px" width="9" height="9" viewBox="0 0 9 9"><rect x="0.5" y="0.5" width="8" height="8" rx="1" fill="#f4f4f4" stroke="#919191" stroke-width="1"/><path d="M2 4.5 H7" stroke="#3a4a9a" stroke-width="1"/><path d="M4.5 2 V7" stroke="#3a4a9a" stroke-width="1"/></svg><svg style="position:absolute;left:79.8px;top:549.5px" width="16" height="16" viewBox="0 0 16 16"><rect x="1.5" y="1.5" width="13" height="13" fill="#fff" stroke="#4068e8" stroke-width="1"/><path d="M1.5 0 V16 M14.5 0 V16 M0 1.5 H16 M0 14.5 H16" stroke="#4068e8" stroke-width="1"/><text x="8" y="12.9" text-anchor="middle" font-family="Liberation Sans, sans-serif" font-size="13.5" font-weight="bold" fill="#4068e8" stroke="#4068e8" stroke-width="0.35">G</text></svg><div style="position:absolute;left:73px;top:575px;width:6px;height:1px;background:repeating-linear-gradient(to right,#9a9a9a 0 1px,transparent 1px 2px);"></div><svg style="position:absolute;left:64.0px;top:571.0px" width="9" height="9" viewBox="0 0 9 9"><rect x="0.5" y="0.5" width="8" height="8" rx="1" fill="#f4f4f4" stroke="#919191" stroke-width="1"/><path d="M2 4.5 H7" stroke="#3a4a9a" stroke-width="1"/><path d="M4.5 2 V7" stroke="#3a4a9a" stroke-width="1"/></svg><svg style="position:absolute;left:79.8px;top:567.5px" width="16" height="16" viewBox="0 0 16 16"><rect x="1.5" y="1.5" width="13" height="13" fill="#fff" stroke="#4068e8" stroke-width="1"/><path d="M1.5 0 V16 M14.5 0 V16 M0 1.5 H16 M0 14.5 H16" stroke="#4068e8" stroke-width="1"/><text x="8" y="12.9" text-anchor="middle" font-family="Liberation Sans, sans-serif" font-size="13.5" font-weight="bold" fill="#4068e8" stroke="#4068e8" stroke-width="0.35">G</text></svg><div style="position:absolute;left:55px;top:593px;width:6px;height:1px;background:repeating-linear-gradient(to right,#9a9a9a 0 1px,transparent 1px 2px);"></div><svg style="position:absolute;left:46.0px;top:589.0px" width="9" height="9" viewBox="0 0 9 9"><rect x="0.5" y="0.5" width="8" height="8" rx="1" fill="#f4f4f4" stroke="#919191" stroke-width="1"/><path d="M2 4.5 H7" stroke="#3a4a9a" stroke-width="1"/><path d="M4.5 2 V7" stroke="#3a4a9a" stroke-width="1"/></svg><svg style="position:absolute;left:63.9px;top:585.5px" width="16" height="16" viewBox="0 0 16 16"><text x="8" y="14.2" text-anchor="middle" font-family="Liberation Sans, sans-serif" font-size="15" font-weight="bold" fill="#a3123f">T</text></svg><div style="position:absolute;left:55px;top:611px;width:6px;height:1px;background:repeating-linear-gradient(to right,#9a9a9a 0 1px,transparent 1px 2px);"></div><svg style="position:absolute;left:46.0px;top:607.0px" width="9" height="9" viewBox="0 0 9 9"><rect x="0.5" y="0.5" width="8" height="8" rx="1" fill="#f4f4f4" stroke="#919191" stroke-width="1"/><path d="M2 4.5 H7" stroke="#3a4a9a" stroke-width="1"/><path d="M4.5 2 V7" stroke="#3a4a9a" stroke-width="1"/></svg><svg style="position:absolute;left:63.9px;top:603.5px" width="16" height="16" viewBox="0 0 16 16"><text x="8" y="14.2" text-anchor="middle" font-family="Liberation Sans, sans-serif" font-size="15" font-weight="bold" fill="#a3123f">T</text></svg><div style="position:absolute;left:15px;top:629px;width:10px;height:1px;background:repeating-linear-gradient(to right,#9a9a9a 0 1px,transparent 1px 2px);"></div><svg style="position:absolute;left:26.5px;top:621.5px" width="16" height="16" viewBox="0 0 16 16"><path d="M3.1 1.9 H13.6 V12 L11.9 13.7 H1.8 V2.9 Z" fill="#fff" stroke="#000" stroke-width="1.2" stroke-linejoin="miter"/><rect x="4.4" y="4.1" width="6.8" height="6.7" fill="#fff" stroke="#000" stroke-width="1"/><path d="M2.2 2.3 L4.4 4.1 M13.6 1.9 L11.2 4.1 M1.8 13.7 L4.4 10.8 M12.8 12.9 L11.2 10.8" stroke="#000" stroke-width="0.8"/><path d="M5 2.9 l0.9 -0.6 l0.9 0.6 l0.9 -0.6 l0.9 0.6 l0.9 -0.6 l0.9 0.6 M4.6 12.4 l0.9 -0.6 l0.9 0.6 l0.9 -0.6 l0.9 0.6 l0.9 -0.6 l0.9 0.6" stroke="#000" stroke-width="0.45" fill="none"/></svg><div style="position:absolute;left:250px;top:187px;width:1px;height:457px;box-sizing:border-box;background:#9e9e9e;"></div><div style="position:absolute;left:253px;top:413px;width:2px;height:2px;box-sizing:border-box;background:#fff;"></div><div style="position:absolute;left:252px;top:412px;width:2px;height:2px;box-sizing:border-box;background:#868686;"></div><div style="position:absolute;left:253px;top:418px;width:2px;height:2px;box-sizing:border-box;background:#fff;"></div><div style="position:absolute;left:252px;top:417px;width:2px;height:2px;box-sizing:border-box;background:#868686;"></div><div style="position:absolute;left:253px;top:423px;width:2px;height:2px;box-sizing:border-box;background:#fff;"></div><div style="position:absolute;left:252px;top:422px;width:2px;height:2px;box-sizing:border-box;background:#868686;"></div><div style="position:absolute;left:253px;top:428px;width:2px;height:2px;box-sizing:border-box;background:#fff;"></div><div style="position:absolute;left:252px;top:427px;width:2px;height:2px;box-sizing:border-box;background:#868686;"></div><div style="position:absolute;left:256px;top:138px;width:19px;height:24px;box-sizing:border-box;background:linear-gradient(#eeeeee,#e3e3e3);border:1px solid #adadad;"></div><div style="position:absolute;left:276px;top:138px;width:19px;height:24px;box-sizing:border-box;background:linear-gradient(#eeeeee,#e3e3e3);border:1px solid #adadad;"></div><svg style="position:absolute;left:263.4px;top:146.8px" width="4" height="6" viewBox="0 0 4 6"><path d="M3.8 0 V6 L0.2 3 Z" fill="#000"/></svg><svg style="position:absolute;left:283.5px;top:146.8px" width="4" height="6" viewBox="0 0 4 6"><path d="M0.2 0 V6 L3.8 3 Z" fill="#000"/></svg><svg style="position:absolute;left:305.2px;top:144px" width="16" height="16" viewBox="0 0 16 16"><path d="M0.6 9.7 V5.2 L4 1.3 H11.3 L14.7 5.2 V9.7 H12.1 V6.2 L10.1 3.9 H5.2 L3.2 6.2 V9.7 Z" fill="#868686" stroke="#4a4a4a" stroke-width="0.7"/><path d="M3.6 9.7 V6.4 L5.4 4.3 H9.9 L11.7 6.4 V9.7 Z" fill="#e4e4e4"/><text x="1.5" y="15.8" font-family="Liberation Sans, sans-serif" font-size="11.5" font-weight="bold" fill="#1f5fb4" stroke="#1f5fb4" stroke-width="0.3" textLength="13" lengthAdjust="spacingAndGlyphs">ex</text></svg><div style="position:absolute;left:403px;top:142px;width:273px;height:23px;box-sizing:border-box;background:#fff;border:1px solid #7a7a7a;"></div><div style="position:absolute;left:403.0px;top:171.0px;width:13px;height:13px;box-sizing:border-box;border:1px solid #333;border-radius:50%;background:#fff;"></div><div style="position:absolute;left:575.0px;top:171.0px;width:13px;height:13px;box-sizing:border-box;border:1px solid #333;border-radius:50%;background:#fff;"></div><div style="position:absolute;left:578.0px;top:174.0px;width:7px;height:7px;border-radius:50%;background:#333;"></div><div style="position:absolute;left:255px;top:200px;width:422px;height:55px;box-sizing:border-box;border:1px solid #dcdcdc;"></div><div style="position:absolute;left:261px;top:192px;width:94px;height:16px;box-sizing:border-box;background:#f0f0f0;"></div><div style="position:absolute;left:257.0px;top:212.0px;width:13px;height:13px;box-sizing:border-box;border:1px solid #333;border-radius:50%;background:#fff;"></div><div style="position:absolute;left:260.0px;top:215.0px;width:7px;height:7px;border-radius:50%;background:#333;"></div><div style="position:absolute;left:257.0px;top:236.0px;width:13px;height:13px;box-sizing:border-box;border:1px solid #333;border-radius:50%;background:#fff;"></div><div style="position:absolute;left:684px;top:204px;width:30px;height:23px;box-sizing:border-box;background:#e1e1e1;border:1px solid #adadad;"></div><svg style="position:absolute;left:687px;top:209px" width="26" height="15" viewBox="0 0 26 15">
<rect x="0.9" y="1" width="13" height="12.8" fill="#d8e030"/>
<path d="M15.3 1 V7.5" stroke="#fff" stroke-width="1"/>
<circle cx="5.6" cy="8.9" r="3.8" fill="#0c8a3c"/>
<path d="M5.4 8 H9.4 M5.6 10.6 H9" stroke="#d8f0d8" stroke-width="0.7"/>
<path d="M8.6 7.6 C14 6.6 19 9.6 25 5.4 M9 10.2 C14 9.6 19 12.6 25 8.2 M12 12.4 C16 12.4 20 13 24 10.6" fill="none" stroke="#fff" stroke-width="1.6"/>
<path d="M8.8 8.3 C14 7.5 19 10.4 24.6 6.4 M9 11 C14 10.4 19 13.2 24.6 9.2" fill="none" stroke="#2a8ad8" stroke-width="1.1"/>
</svg><div style="position:absolute;left:403px;top:260px;width:496px;height:23px;box-sizing:border-box;background:#e1e1e1;border:1px solid #adadad;"></div><svg style="position:absolute;left:885.4px;top:268.9px" width="10" height="6" viewBox="0 0 10 6"><path d="M1 0.8 L5 4.8 L9 0.8" fill="none" stroke="#3c3c3c" stroke-width="1.1"/></svg><div style="position:absolute;left:403px;top:285px;width:496px;height:23px;box-sizing:border-box;background:#e1e1e1;border:1px solid #adadad;"></div><svg style="position:absolute;left:885.4px;top:293.9px" width="10" height="6" viewBox="0 0 10 6"><path d="M1 0.8 L5 4.8 L9 0.8" fill="none" stroke="#3c3c3c" stroke-width="1.1"/></svg><div style="position:absolute;left:255px;top:358px;width:751px;height:302px;box-sizing:border-box;border:1px solid #d9d9d9;"></div><div style="position:absolute;left:389px;top:338px;width:184px;height:20px;box-sizing:border-box;border:1px solid #d9d9d9;border-bottom:none;background:#f0f0f0;"></div><div style="position:absolute;left:255px;top:336px;width:135px;height:24px;box-sizing:border-box;border:1px solid #d9d9d9;border-bottom:none;background:#fff;"></div><svg style="position:absolute;left:260px;top:369px" width="16" height="16" viewBox="0 0 16 16">
<rect x="0" y="0.8" width="16" height="6" rx="3" fill="#454545"/>
<path d="M2.6 1.8 V5.8 M5 1.8 V5.8 M7.4 1.8 V5.8 M9.8 1.8 V5.8 M12.2 1.8 V5.8 M14.2 2.4 V5.2" stroke="#f2f2f2" stroke-width="1.1"/>
<path d="M4.4 15 V8.6 M2.2 11 L4.4 8.4 L6.6 11 M11.4 15 V8.6 M9.2 11 L11.4 8.4 L13.6 11" fill="none" stroke="#fff" stroke-width="2.6"/>
<path d="M4.4 14.8 V8.8 M2.4 10.9 L4.4 8.6 L6.4 10.9 M11.4 14.8 V8.8 M9.4 10.9 L11.4 8.6 L13.4 10.9" fill="none" stroke="#00aeef" stroke-width="1.2"/></svg><div style="position:absolute;left:399px;top:365px;width:57px;height:23px;box-sizing:border-box;background:#fff;border:1px solid #cccccc;"></div><div style="position:absolute;left:570.0px;top:369.0px;width:13px;height:13px;box-sizing:border-box;border:1px solid #333;border-radius:50%;background:#fff;"></div><div style="position:absolute;left:695.0px;top:369.0px;width:13px;height:13px;box-sizing:border-box;border:1px solid #333;border-radius:50%;background:#fff;"></div><div style="position:absolute;left:801.7px;top:370.0px;width:13px;height:13px;box-sizing:border-box;border:1px solid #333;border-radius:50%;background:#fff;"></div><div style="position:absolute;left:804.7px;top:373.0px;width:7px;height:7px;border-radius:50%;background:#333;"></div><div style="position:absolute;left:399px;top:396px;width:26px;height:22px;box-sizing:border-box;background:#fff;border:1px solid #7a7a7a;"></div><div style="position:absolute;left:426px;top:397px;width:15px;height:9px;box-sizing:border-box;background:#e1e1e1;border:1px solid #adadad;"></div><div style="position:absolute;left:426px;top:407px;width:15px;height:10px;box-sizing:border-box;background:#e1e1e1;border:1px solid #adadad;"></div><svg style="position:absolute;left:430.5px;top:400px" width="6" height="3" viewBox="0 0 6 3"><path d="M0 3 L3 0 L6 3Z" fill="#000"/></svg><svg style="position:absolute;left:430.5px;top:410px" width="6" height="3.4" viewBox="0 0 6 3.4"><path d="M0 0 L3 3.4 L6 0Z" fill="#000"/></svg><div style="position:absolute;left:490px;top:396px;width:342px;height:23px;box-sizing:border-box;background:#f0f0f0;border:1px solid #7a7a7a;"></div><div style="position:absolute;left:833px;top:396px;width:30px;height:22px;box-sizing:border-box;background:#e1e1e1;border:1px solid #adadad;"></div><svg style="position:absolute;overflow:visible;left:839px;top:399.4px" width="16" height="16" viewBox="0 0 16 16"><g transform="rotate(31 8 8)"><rect x="5" y="2.4" width="6" height="8" fill="#000"/><path d="M5 11.1 H11 L8 16 Z" fill="#000"/><rect x="5" y="-0.2" width="6" height="1.9" rx="0.6" fill="#000"/></g></svg><div style="position:absolute;left:865px;top:396px;width:30px;height:22px;box-sizing:border-box;background:#e1e1e1;border:1px solid #adadad;"></div><svg style="position:absolute;left:872px;top:399.0px" width="16" height="16" viewBox="0 0 16 16"><rect x="0" y="0" width="16" height="16" fill="#a4ada4"/><path d="M2.6 3.8 H7.2 L8.6 2.4 H12.4 Q13.4 2.4 13.4 3.4 V12.4 Q13.4 13.4 12.4 13.4 H3.6 Q2.6 13.4 2.6 12.4 Z" fill="none" stroke="#d2d9d2" stroke-width="1"/><circle cx="9.9" cy="6" r="1.45" fill="#fff"/><circle cx="6" cy="10.2" r="1.45" fill="#fff"/><circle cx="9.9" cy="10.2" r="1.45" fill="#fff"/></svg><div style="position:absolute;left:256px;top:425px;width:720px;height:38px;box-sizing:border-box;border:2px solid #ff0000;border-radius:6px;box-shadow:0 0 6px rgba(0,0,0,0.38), inset 0 0 6px rgba(0,0,0,0.33);"></div><div style="position:absolute;left:400px;top:434px;width:363px;height:23px;box-sizing:border-box;background:#e1e1e1;border:1px solid #adadad;"></div><svg style="position:absolute;left:749.4px;top:442.9px" width="10" height="6" viewBox="0 0 10 6"><path d="M1 0.8 L5 4.8 L9 0.8" fill="none" stroke="#3c3c3c" stroke-width="1.1"/></svg><div style="position:absolute;left:801.7px;top:438.0px;width:13px;height:13px;box-sizing:border-box;border:1px solid #333;border-radius:50%;background:#fff;"></div><div style="position:absolute;left:896.7px;top:438.0px;width:13px;height:13px;box-sizing:border-box;border:1px solid #333;border-radius:50%;background:#fff;"></div><div style="position:absolute;left:899.7px;top:441.0px;width:7px;height:7px;border-radius:50%;background:#333;"></div><svg style="position:absolute;left:259.5px;top:473px" width="17" height="15" viewBox="0 0 17 15">
<path d="M7 1.5 H16 V6.2 H13.2 C13.6 10.4 10.6 13.5 7 13.5 C3.6 13.5 1 11 1 7.6 C1 4.2 3.6 1.5 7 1.5 Z" fill="#a6a6a6" stroke="#484848" stroke-width="1.1"/>
<circle cx="7.2" cy="7.6" r="1.7" fill="#ececec"/></svg><div style="position:absolute;left:400px;top:469px;width:57px;height:23px;box-sizing:border-box;background:#fff;border:1px solid #7a7a7a;"></div><div style="position:absolute;left:571.8px;top:473.0px;width:13px;height:13px;box-sizing:border-box;border:1px solid #333;border-radius:50%;background:#fff;"></div><div style="position:absolute;left:695.0px;top:473.0px;width:13px;height:13px;box-sizing:border-box;border:1px solid #333;border-radius:50%;background:#fff;"></div><div style="position:absolute;left:698.0px;top:476.0px;width:7px;height:7px;border-radius:50%;background:#333;"></div><div style="position:absolute;left:801.7px;top:473.0px;width:13px;height:13px;box-sizing:border-box;border:1px solid #333;border-radius:50%;background:#fff;"></div><div style="position:absolute;left:400px;top:496px;width:57px;height:23px;box-sizing:border-box;background:#fff;border:1px solid #7a7a7a;"></div><svg style="position:absolute;left:260px;top:535px" width="16" height="16" viewBox="0 0 16 16">
<path d="M5.2 1 H10.8 L15 5.2 V10.8 L10.8 15 H5.2 L1 10.8 V5.2 Z" fill="#f2f2f2" stroke="#8a8a8a" stroke-width="1.2"/>
<path d="M5.7 2.3 H10.3 L13.7 5.7 V10.3 L10.3 13.7 H5.7 L2.3 10.3 V5.7 Z" fill="none" stroke="#2e2e2e" stroke-width="1.1"/>
<path d="M1.4 14 L6.6 9" stroke="#ed1c24" stroke-width="1.8"/><path d="M4.2 7.2 H8.8 V11.8 Z" fill="#ed1c24"/></svg><div style="position:absolute;left:399px;top:532px;width:57px;height:23px;box-sizing:border-box;background:#fff;border:1px solid #7a7a7a;"></div><div style="position:absolute;left:588px;top:532px;width:57px;height:23px;box-sizing:border-box;background:#fff;border:1px solid #7a7a7a;"></div><div style="position:absolute;left:695.0px;top:536.0px;width:13px;height:13px;box-sizing:border-box;border:1px solid #333;border-radius:50%;background:#fff;"></div><div style="position:absolute;left:801.7px;top:536.5px;width:13px;height:13px;box-sizing:border-box;border:1px solid #333;border-radius:50%;background:#fff;"></div><div style="position:absolute;left:801.7px;top:536.5px;width:13px;height:13px;box-sizing:border-box;border:1px solid #333;border-radius:50%;background:#fff;"></div><div style="position:absolute;left:804.7px;top:539.5px;width:7px;height:7px;border-radius:50%;background:#333;"></div><div style="position:absolute;left:399px;top:559px;width:57px;height:23px;box-sizing:border-box;background:#fff;border:1px solid #7a7a7a;"></div><div style="position:absolute;left:588px;top:559px;width:57px;height:23px;box-sizing:border-box;background:#fff;border:1px solid #7a7a7a;"></div><div style="position:absolute;left:399px;top:593px;width:26px;height:22px;box-sizing:border-box;background:#fff;border:1px solid #7a7a7a;"></div><div style="position:absolute;left:426px;top:594px;width:15px;height:9px;box-sizing:border-box;background:#e1e1e1;border:1px solid #adadad;"></div><div style="position:absolute;left:426px;top:604px;width:15px;height:10px;box-sizing:border-box;background:#e1e1e1;border:1px solid #adadad;"></div><svg style="position:absolute;left:430.5px;top:597px" width="6" height="3" viewBox="0 0 6 3"><path d="M0 3 L3 0 L6 3Z" fill="#000"/></svg><svg style="position:absolute;left:430.5px;top:607px" width="6" height="3.4" viewBox="0 0 6 3.4"><path d="M0 0 L3 3.4 L6 0Z" fill="#000"/></svg><div style="position:absolute;left:490px;top:593px;width:342px;height:23px;box-sizing:border-box;background:#f0f0f0;border:1px solid #7a7a7a;"></div><div style="position:absolute;left:833px;top:593px;width:30px;height:22px;box-sizing:border-box;background:#e1e1e1;border:1px solid #adadad;"></div><svg style="position:absolute;overflow:visible;left:839px;top:596.4px" width="16" height="16" viewBox="0 0 16 16"><g transform="rotate(31 8 8)"><rect x="5" y="2.4" width="6" height="8" fill="#000"/><path d="M5 11.1 H11 L8 16 Z" fill="#000"/><rect x="5" y="-0.2" width="6" height="1.9" rx="0.6" fill="#000"/></g></svg><div style="position:absolute;left:865px;top:593px;width:30px;height:22px;box-sizing:border-box;background:#e1e1e1;border:1px solid #adadad;"></div><svg style="position:absolute;left:872px;top:596.0px" width="16" height="16" viewBox="0 0 16 16"><rect x="0" y="0" width="16" height="16" fill="#a4ada4"/><path d="M2.6 3.8 H7.2 L8.6 2.4 H12.4 Q13.4 2.4 13.4 3.4 V12.4 Q13.4 13.4 12.4 13.4 H3.6 Q2.6 13.4 2.6 12.4 Z" fill="none" stroke="#d2d9d2" stroke-width="1"/><circle cx="9.9" cy="6" r="1.45" fill="#fff"/><circle cx="6" cy="10.2" r="1.45" fill="#fff"/><circle cx="9.9" cy="10.2" r="1.45" fill="#fff"/></svg><span class="t" style="left:34.54px;top:6px;font-size:13px;letter-spacing:-0.30px;transform:scaleX(0.9480);color:#fff;">Pleiades Modeleur</span><span class="t" style="left:142.60px;top:6px;font-size:13px;letter-spacing:-0.30px;transform:scaleX(0.8820);color:#fff;">LES_FONCTIONNAIRES / Projet Base1</span><span class="t" style="left:5.55px;top:35.4px;letter-spacing:-0.14px;">Fichier</span><span class="t" style="left:49.55px;top:35.4px;letter-spacing:0.17px;">Edition</span><span class="t" style="left:95.55px;top:35.4px;letter-spacing:-0.10px;">Plan</span><span class="t" style="left:127.55px;top:35.4px;letter-spacing:-0.03px;">Fond de plan</span><span class="t" style="left:206.50px;top:35.4px;letter-spacing:0.15px;">Affichage</span><span class="t" style="left:265.55px;top:35.4px;letter-spacing:-0.13px;">Eclairement</span><span class="t" style="left:336.45px;top:35.4px;letter-spacing:0.06px;">Quartier</span><span class="t" style="left:388.95px;top:35.4px;letter-spacing:0.06px;">Outils</span><span class="t" style="left:429.50px;top:35.4px;letter-spacing:-0.30px;transform:scaleX(0.9959);">Aide</span><span class="t" style="left:754.55px;top:60px;letter-spacing:0.17px;">Bâtiment</span><span class="t" style="left:817.92px;top:59.5px;letter-spacing:-0.30px;transform:scaleX(0.9736);">C1</span><span class="t" style="left:19.90px;top:115px;letter-spacing:-0.30px;transform:scaleX(0.9936);">Généralités</span><span class="t" style="left:130.55px;top:115px;letter-spacing:-0.10px;">Plan</span><span class="t" style="left:225.54px;top:115px;letter-spacing:-0.30px;transform:scaleX(0.9179);">STD</span><span class="t" style="left:311.11px;top:115px;letter-spacing:-0.30px;transform:scaleX(0.9379);">RT2012</span><span class="t" style="left:412.18px;top:115px;letter-spacing:-0.30px;transform:scaleX(0.8623);">RTEx</span><span class="t" style="left:511.57px;top:115px;letter-spacing:-0.30px;transform:scaleX(0.9626);">3D</span><span class="t" style="left:595.90px;top:115px;letter-spacing:0.10px;">Calcul</span><span class="t" style="left:3.50px;top:140px;letter-spacing:0.18px;">Afficher</span><span class="t" style="left:56.25px;top:140.5px;letter-spacing:0.38px;">Tout</span><span class="t" style="left:122.25px;top:167px;letter-spacing:0.38px;">Tout</span><span class="t" style="left:8.55px;top:186.5px;letter-spacing:0.04px;">Projet</span><span class="t" style="left:48.55px;top:206.5px;letter-spacing:-0.02px;">Projet</span><span class="t" style="left:66.55px;top:224.5px;letter-spacing:-0.04px;">Bâtiment 1</span><span class="t" style="left:84.90px;top:242.5px;letter-spacing:-0.08px;">Chaudières individuelles</span><span class="t" style="left:85.15px;top:260.5px;letter-spacing:-0.30px;transform:scaleX(0.9875);">Zone 1</span><span class="t" style="left:102.58px;top:278.5px;letter-spacing:-0.30px;transform:scaleX(0.9695);">Emetteur ECS 1</span><span class="t" style="left:103.26px;top:296.5px;letter-spacing:-0.30px;transform:scaleX(0.9472);">T2</span><span class="t" style="left:120.55px;top:314.5px;letter-spacing:-0.19px;">Emetteur 1</span><span class="t" style="left:121.45px;top:332.5px;letter-spacing:-0.11px;">Ventilation 1</span><span class="t" style="left:120.60px;top:350.5px;letter-spacing:-0.30px;transform:scaleX(0.9437);">Pièce_71</span><span class="t" style="left:120.60px;top:368.5px;letter-spacing:-0.30px;transform:scaleX(0.9426);">Pièce_83</span><span class="t" style="left:120.60px;top:386.5px;letter-spacing:-0.30px;transform:scaleX(0.9510);">Pièce_101</span><span class="t" style="left:120.58px;top:404.5px;letter-spacing:-0.30px;transform:scaleX(0.9645);">Pièce_110</span><span class="t" style="left:120.60px;top:422.5px;letter-spacing:-0.30px;transform:scaleX(0.9510);">Pièce_131</span><span class="t" style="left:120.59px;top:440.5px;letter-spacing:-0.30px;transform:scaleX(0.9539);">Pièce_140</span><span class="t" style="left:120.60px;top:458.5px;letter-spacing:-0.30px;transform:scaleX(0.9510);">Pièce_161</span><span class="t" style="left:120.59px;top:476.5px;letter-spacing:-0.30px;transform:scaleX(0.9539);">Pièce_170</span><span class="t" style="left:120.60px;top:494.5px;letter-spacing:-0.30px;transform:scaleX(0.9510);">Pièce_191</span><span class="t" style="left:120.59px;top:512.5px;letter-spacing:-0.30px;transform:scaleX(0.9596);">Pièce_200</span><span class="t" style="left:103.26px;top:530.5px;letter-spacing:-0.30px;transform:scaleX(0.9667);">T3</span><span class="t" style="left:103.26px;top:548.5px;letter-spacing:-0.30px;transform:scaleX(0.9520);">T4</span><span class="t" style="left:103.26px;top:566.5px;letter-spacing:-0.30px;transform:scaleX(0.9630);">T5</span><span class="t" style="left:85.00px;top:584.5px;letter-spacing:0.33px;">communs</span><span class="t" style="left:84.70px;top:602.5px;letter-spacing:0.19px;">loggia</span><span class="t" style="left:48.55px;top:620.5px;letter-spacing:-0.30px;">Pièces non zonées</span><span class="t" style="left:333.49px;top:144px;letter-spacing:0.40px;transform:scaleX(1.0638);">Nom</span><span class="t" style="left:406.45px;top:143.6px;letter-spacing:-0.11px;">Ventilation 1</span><span class="t" style="left:418.40px;top:168.5px;letter-spacing:0.11px;">Inchangé</span><span class="t" style="left:591.50px;top:168.5px;letter-spacing:-0.30px;">Autres cas</span><span class="t" style="left:262.50px;top:191.5px;letter-spacing:-0.30px;transform:scaleX(0.9942);">Surface desservie</span><span class="t" style="left:273.50px;top:209.5px;letter-spacing:0.26px;">Automatique</span><span class="t" style="left:272.55px;top:233.5px;letter-spacing:0.31px;">Manuel</span><span class="t" style="left:721.00px;top:207px;letter-spacing:0.07px;color:#0066cc;text-decoration:underline;">e-venthys.fr</span><span class="t" style="left:267.95px;top:260px;letter-spacing:0.10px;">Ventilation initiale</span><span class="t" style="left:406.95px;top:262.5px;letter-spacing:-0.06px;">Ventilation par ouverture de fenêtres</span><span class="t" style="left:267.95px;top:286.5px;letter-spacing:-0.03px;">Ventilation renovée</span><span class="t" style="left:406.05px;top:287.5px;letter-spacing:-0.00px;">Résidentiel: Ventilation hybride</span><span class="t" style="left:262.50px;top:338.5px;letter-spacing:-0.05px;">Système de ventilation</span><span class="t" style="left:394.45px;top:340px;letter-spacing:-0.03px;">Ventilation du projet de référence</span><span class="t" style="left:277.55px;top:367px;letter-spacing:-0.12px;">Entrée d&#x27;air</span><span class="t" style="left:434.77px;top:366.6px;letter-spacing:-0.30px;transform:scaleX(0.9623);color:#6d6d6d;">375</span><span class="t" style="left:461.56px;top:367.1px;letter-spacing:0.40px;transform:scaleX(1.1150);">m<span style="position:relative;top:-3px;font-size:10.5px">³</span>/h</span><span class="t" style="left:585.40px;top:367px;letter-spacing:0.11px;">Inchangé</span><span class="t" style="left:710.32px;top:367px;letter-spacing:0.40px;transform:scaleX(1.0275);">Modifié</span><span class="t" style="left:817.45px;top:367.5px;letter-spacing:0.17px;">Modifié suivant objet bibliothèque</span><span class="t" style="left:371.97px;top:397px;letter-spacing:0.40px;transform:scaleX(1.0827);">Nb</span><span class="t" style="left:416.15px;top:397.4px;letter-spacing:-0.05px;transform:scaleX(0.9913);">5</span><span class="t" style="left:492.75px;top:398px;letter-spacing:-0.17px;">Matrys Hygro A - F2 - 1 SdB - 1 WC</span><span class="t" style="left:264.60px;top:436px;letter-spacing:-0.30px;transform:scaleX(0.9492);">Réseau</span><span class="t" style="left:403.75px;top:436.5px;">Extracteur mécanique sur conduit de ventilation naturelle</span><span class="t" style="left:817.30px;top:436px;letter-spacing:0.12px;">Inchangé</span><span class="t" style="left:912.53px;top:436px;letter-spacing:0.40px;transform:scaleX(1.0225);">Modifié</span><span class="t" style="left:277.55px;top:471px;letter-spacing:-0.14px;">Puissance ventilateur</span><span class="t" style="left:435.56px;top:470.5px;letter-spacing:-0.30px;transform:scaleX(0.9601);">400</span><span class="t" style="left:465.95px;top:471.5px;letter-spacing:-0.25px;transform:scaleX(0.9778);">W</span><span class="t" style="left:587.60px;top:471px;letter-spacing:0.08px;">Inchangé</span><span class="t" style="left:710.32px;top:471px;letter-spacing:0.40px;transform:scaleX(1.0275);">Modifié</span><span class="t" style="left:817.45px;top:471px;letter-spacing:0.17px;">Modifié suivant objet bibliothèque</span><span class="t" style="left:262.05px;top:497.5px;letter-spacing:-0.11px;">Échangeur</span><span class="t" style="left:447.44px;top:497.4px;letter-spacing:0.10px;transform:scaleX(1.0172);">0</span><span class="t" style="left:466.92px;top:498px;letter-spacing:0.40px;transform:scaleX(1.1667);">-</span><span class="t" style="left:277.55px;top:534px;letter-spacing:-0.22px;">Extraction de base</span><span class="t" style="left:434.56px;top:533.8px;letter-spacing:-0.30px;transform:scaleX(0.9705);">300</span><span class="t" style="left:461.56px;top:534.1px;letter-spacing:0.40px;transform:scaleX(1.1150);">m<span style="position:relative;top:-3px;font-size:10.5px">³</span>/h</span><span class="t" style="left:511.50px;top:534px;letter-spacing:-0.30px;transform:scaleX(0.9800);">Assisté (base)</span><span class="t" style="left:635.84px;top:533.8px;letter-spacing:0.10px;transform:scaleX(1.0172);">0</span><span class="t" style="left:651.06px;top:534.1px;letter-spacing:0.40px;transform:scaleX(1.1150);">m<span style="position:relative;top:-3px;font-size:10.5px">³</span>/h</span><span class="t" style="left:709.90px;top:534px;letter-spacing:0.18px;">Inchangé</span><span class="t" style="left:817.53px;top:534.5px;letter-spacing:0.40px;transform:scaleX(1.0225);">Modifié</span><span class="t" style="left:277.55px;top:561px;letter-spacing:0.09px;">Débit de pointe</span><span class="t" style="left:434.41px;top:560.7px;letter-spacing:-0.30px;transform:scaleX(0.9784);">600</span><span class="t" style="left:461.56px;top:561.1px;letter-spacing:0.40px;transform:scaleX(1.1150);">m<span style="position:relative;top:-3px;font-size:10.5px">³</span>/h</span><span class="t" style="left:501.50px;top:560.5px;letter-spacing:-0.13px;">Assisté (pointe)</span><span class="t" style="left:635.84px;top:560.7px;letter-spacing:0.10px;transform:scaleX(1.0172);">0</span><span class="t" style="left:651.06px;top:561.1px;letter-spacing:0.40px;transform:scaleX(1.1150);">m<span style="position:relative;top:-3px;font-size:10.5px">³</span>/h</span><span class="t" style="left:327.55px;top:594px;letter-spacing:0.25px;">Nb conduits</span><span class="t" style="left:415.30px;top:594.2px;">1</span><span class="t" style="left:492.76px;top:595.5px;letter-spacing:-0.30px;transform:scaleX(0.9940);">PRECO_Hybride Gaz Fonctionnaires</span></body></html>
